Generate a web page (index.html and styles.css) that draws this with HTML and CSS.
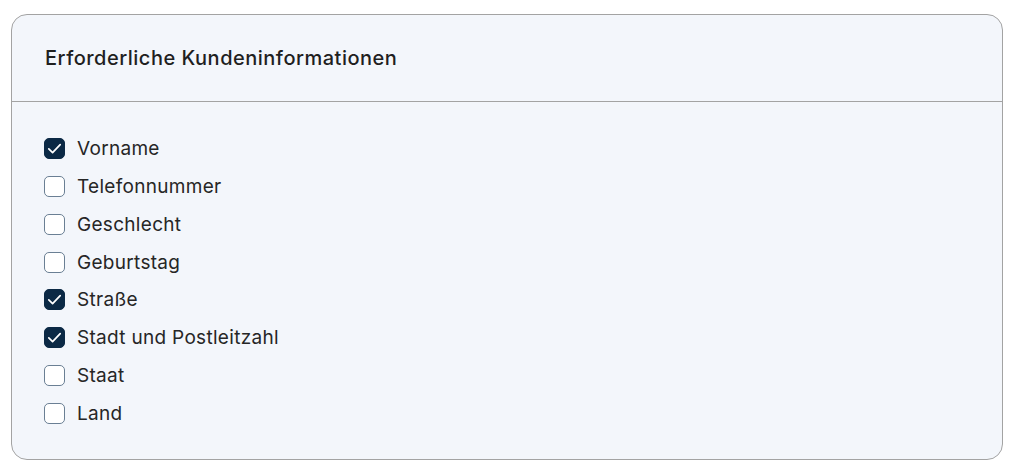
FILE: index.html
```html
<!DOCTYPE html>
<html lang="de">

<head>
    <meta charset="UTF-8">
    <meta name="viewport" content="width=device-width, initial-scale=1.0">
    <title>Kundeninformationen</title>
    <link rel="stylesheet" href="styles.css">
</head>

<body>
    <div class="card">
        <div class="card-header">Erforderliche Kundeninformationen</div>
        <div class="card-body">
            <label class="option"><span class="box checked"><svg viewBox="0 0 21 21"><path d="M4.8 10.8l3.8 3.8 7.6-8"/></svg></span>Vorname</label>
            <label class="option"><span class="box"></span>Telefonnummer</label>
            <label class="option"><span class="box"></span>Geschlecht</label>
            <label class="option"><span class="box"></span>Geburtstag</label>
            <label class="option"><span class="box checked"><svg viewBox="0 0 21 21"><path d="M4.8 10.8l3.8 3.8 7.6-8"/></svg></span>Straße</label>
            <label class="option"><span class="box checked"><svg viewBox="0 0 21 21"><path d="M4.8 10.8l3.8 3.8 7.6-8"/></svg></span>Stadt und Postleitzahl</label>
            <label class="option"><span class="box"></span>Staat</label>
            <label class="option"><span class="box"></span>Land</label>
        </div>
    </div>
</body>

</html>
```

FILE: styles.css
```css
body {
    margin: 0;
    padding: 14px 10px 10px 11px;
    background: #fff;
    font-family: Inter, "Noto Sans", sans-serif;
    color: #222;
}

.card {
    background: #f3f6fb;
    border: 1px solid #a3a3a3;
    border-radius: 16px;
    height: 446px;
    box-sizing: border-box;
}

.card-header {
    height: 86px;
    display: flex;
    align-items: center;
    padding: 0 33px;
    border-bottom: 1px solid #a3a3a3;
    font-size: 20px;
    font-weight: 500;
    letter-spacing: 0.5px;
    color: #1f1f1f;
}

.card-body {
    display: flex;
    flex-direction: column;
    padding: 28px 32px 0;
}

.option {
    display: flex;
    align-items: center;
    gap: 12px;
    height: 37.75px;
    font-size: 19px;
    letter-spacing: 0.3px;
    color: #262626;
}

.box {
    position: relative;
    width: 21px;
    height: 21px;
    box-sizing: border-box;
    border: 1.5px solid #6a7f94;
    border-radius: 5px;
    background: #fff;
}

.box.checked {
    background: #0b2945;
    border-color: #0b2945;
}

.box svg {
    position: absolute;
    top: -1.5px;
    left: -1.5px;
    width: 21px;
    height: 21px;
    fill: none;
    stroke: #fff;
    stroke-width: 1.7;
    stroke-linecap: round;
    stroke-linejoin: round;
}
```
